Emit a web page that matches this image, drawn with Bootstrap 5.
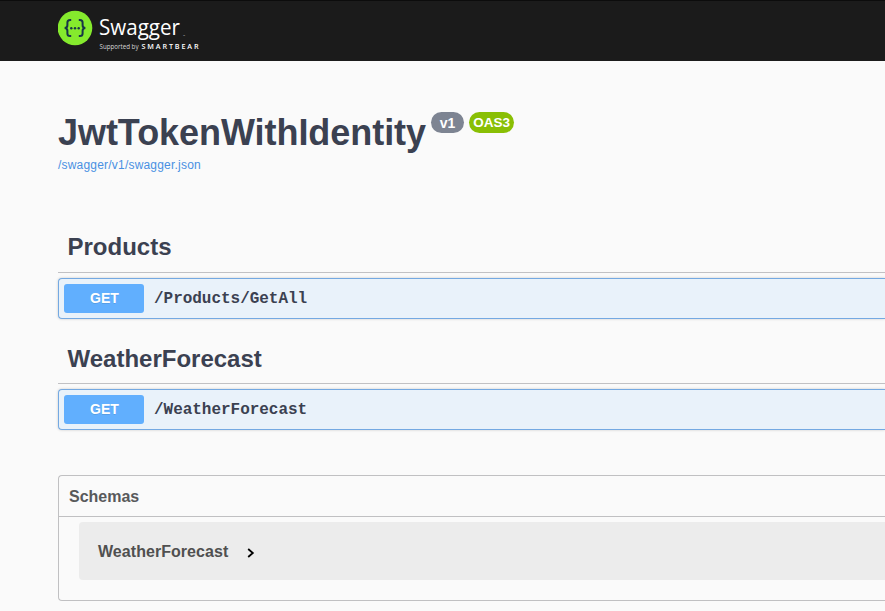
<!DOCTYPE html>
<html lang="en">
<head>
    <meta charset="UTF-8">
    <meta name="viewport" content="width=device-width, initial-scale=1.0">
    <title>Swagger UI</title>
    <link href="https://cdn.jsdelivr.net/npm/bootstrap@5.3.0/dist/css/bootstrap.min.css" rel="stylesheet">
    <style>
        body {
            font-family: "Liberation Sans", Arial, sans-serif;
            background-color: #fafafa;
            color: #3b4151;
            overflow: hidden;
        }

        .topbar {
            height: 61px;
            padding: 0 0 0 58px;
            background: #1b1b1b;
            border-top: 1px solid #0c0c0c;
        }

        .swagger-page {
            padding-left: 58px;
        }

        .api-info {
            height: 161px;
            padding-top: 51px;
        }

        .api-title {
            font-size: 36px;
            line-height: 41px;
            letter-spacing: -0.05px;
        }

        .version-badge {
            width: 33px;
            height: 21px;
            margin-left: 5px;
            border-radius: 11px;
            font-size: 14px;
            line-height: 22px;
            background: #7d8492;
        }

        .version-badge.oas {
            width: 45px;
            font-size: 13.5px;
            background: #89bf04;
        }

        .api-link {
            font-size: 12px;
            line-height: 14px;
            margin-top: 5px;
            color: #4990e2;
            letter-spacing: 0.2px;
        }

        .tag-title {
            height: 51px;
            padding-left: 9.5px;
            font-size: 24px;
            line-height: 49px;
            border-bottom: 1px solid #c1c1c4;
        }

        .tag-title.second {
            line-height: 51px;
        }

        .opblock {
            height: 41px;
            margin: 5px 0 14px;
            padding-left: 5px;
            border: 1px solid #74a9e2;
            border-right: 0;
            border-radius: 4px 0 0 4px;
            background: #e9f2fa;
            box-shadow: 0 0 3px rgba(0, 0, 0, .19);
        }

        .method {
            width: 80px;
            height: 29px;
            padding-left: 1px;
            border-radius: 3px;
            font-size: 14px;
            line-height: 29px;
            background: #61affe;
            text-shadow: 0 1px 0 rgba(0, 0, 0, .1);
        }

        .op-path {
            margin-left: 10px;
            font-family: "Courier New", "Liberation Mono", monospace;
            font-size: 16px;
            line-height: 20px;
            letter-spacing: -0.03px;
        }

        .schemas {
            height: 126px;
            margin-top: 45px;
            border: 1px solid #c0c0c2;
            border-right: 0;
            border-radius: 4px 0 0 4px;
            color: #58595b;
        }

        .schemas-title {
            height: 41px;
            padding-left: 10px;
            font-size: 16px;
            line-height: 42px;
            border-bottom: 1px solid #c0c0c2;
        }

        .schema-model {
            height: 58px;
            margin: 5px 0 0 20px;
            padding: 2px 0 0 19px;
            border-radius: 4px 0 0 4px;
            font-size: 16px;
            letter-spacing: 0.05px;
            color: #505050;
            background: #ececec;
        }

        .chevron {
            margin: 2px 0 0 19px;
        }
    </style>
</head>
<body>
    <header class="topbar">
        <svg class="d-block" width="150" height="59" viewBox="58 1 150 59">
            <circle cx="75" cy="28" r="17.3" fill="#85ea2d"/>
            <g fill="none" stroke="#173647" stroke-width="2">
                <path d="M71.2 20h-1.2q-2.6 0-2.6 2.6v2.6q0 2.8-2.8 2.8q2.8 0 2.8 2.8v2.6q0 2.6 2.6 2.6h1.2"/>
                <path d="M78.8 20h1.2q2.6 0 2.6 2.6v2.6q0 2.8 2.8 2.8q-2.8 0-2.8 2.8v2.6q0 2.6-2.6 2.6h-1.2"/>
            </g>
            <g fill="#173647">
                <circle cx="71.3" cy="28.2" r="1.2"/>
                <circle cx="75" cy="28.2" r="1.2"/>
                <circle cx="78.7" cy="28.2" r="1.2"/>
            </g>
            <g fill="#fff" font-family="Open Sans, Noto Sans, sans-serif">
                <text x="99" y="35" font-size="22" textLength="81" lengthAdjust="spacingAndGlyphs">Swagger</text>
                <text x="183" y="36.5" font-size="2.5">™</text>
                <text x="99.5" y="49.4" font-size="6.5" fill="#d8d8d8" textLength="39" lengthAdjust="spacingAndGlyphs">Supported by</text>
                <text x="141.5" y="49.4" font-size="7.2" font-weight="600" textLength="57">SMARTBEAR</text>
            </g>
        </svg>
    </header>

    <main class="swagger-page">
        <section class="api-info">
            <div class="d-flex align-items-start">
                <h1 class="api-title fw-bold mb-0">JwtTokenWithIdentity</h1>
                <span class="version-badge text-white text-center fw-bold">v1</span>
                <span class="version-badge oas text-white text-center fw-bold">OAS3</span>
            </div>
            <a href="#" class="api-link d-block text-decoration-none">/swagger/v1/swagger.json</a>
        </section>

        <section>
            <h2 class="tag-title fw-bold mb-0">Products</h2>
            <div class="opblock d-flex align-items-center">
                <span class="method text-white text-center fw-bold">GET</span>
                <span class="op-path fw-bold">/Products/GetAll</span>
            </div>
        </section>

        <section>
            <h2 class="tag-title second fw-bold mb-0">WeatherForecast</h2>
            <div class="opblock d-flex align-items-center">
                <span class="method text-white text-center fw-bold">GET</span>
                <span class="op-path fw-bold">/WeatherForecast</span>
            </div>
        </section>

        <section class="schemas">
            <h3 class="schemas-title fw-bold mb-0">Schemas</h3>
            <div class="schema-model d-flex align-items-center fw-bold">
                <span>WeatherForecast</span>
                <svg class="chevron" width="8" height="10" viewBox="0 0 8 10" fill="none" stroke="#000" stroke-width="1.8">
                    <path d="M1.2 1l4.6 4-4.6 4"/>
                </svg>
            </div>
        </section>
    </main>
    <script src="https://cdn.jsdelivr.net/npm/bootstrap@5.3.0/dist/js/bootstrap.bundle.min.js"></script>
</body>
</html>
